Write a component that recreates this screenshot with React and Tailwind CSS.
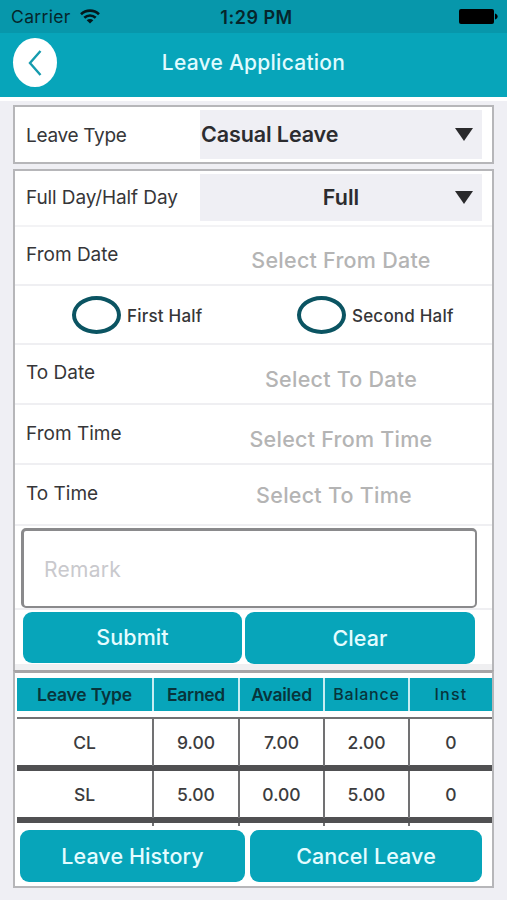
import clsx from 'clsx';

const leaves = [
  { type: 'CL', earned: '9.00', availed: '7.00', balance: '2.00', inst: '0' },
  { type: 'SL', earned: '5.00', availed: '0.00', balance: '5.00', inst: '0' },
];

const COLS = 'grid grid-cols-[137px_86px_85px_85px_1fr]';

const StatusBar = () => (
  <div className="grid h-[33px] grid-cols-[1fr_90px_1fr] items-center bg-[#0797ab] pl-[11px] pr-[9px] text-[#06262c]">
    <div className="flex items-center gap-[9px]">
      <span className="text-[17.5px] leading-[26px] tracking-[0.35px]">Carrier</span>
      <svg width="20" height="15" viewBox="0 0 20 15" fill="none" stroke="#04181c" strokeWidth="2.6">
        <path d="M1 5.2C6 0.4 14 0.4 19 5.2" />
        <path d="M4.3 8.8C7.6 5.7 12.4 5.7 15.7 8.8" />
        <path d="M10 14.6L6.7 11.2C8.6 9.6 11.4 9.6 13.3 11.2Z" fill="#04181c" stroke="none" />
      </svg>
    </div>
    <span className="mt-[2px] pl-[4px] text-center text-[18px] leading-[26px] font-semibold whitespace-nowrap tracking-[0.5px]">1:29 PM</span>
    <svg className="justify-self-end" width="39" height="15" viewBox="0 0 39 15">
      <rect x="0" y="0" width="35" height="15" rx="2" fill="#000" />
      <path d="M36 4.5C39.5 5.5 39.5 9.5 36 10.5Z" fill="#000" />
    </svg>
  </div>
);

const Header = () => (
  <header className="grid h-[64px] grid-cols-[60px_1fr_60px] items-start bg-[#07a5ba]">
    <button aria-label="Back" className="ml-[13px] mt-[5px] flex h-[49px] w-[44px] items-center justify-center rounded-[50%] bg-white">
      <svg width="14" height="26" viewBox="0 0 14 26" fill="none" stroke="#159bae" strokeWidth="2.4">
        <path d="M12.5 1L2 13L12.5 25" />
      </svg>
    </button>
    <h1 className="mt-[14px] text-center text-[21px] leading-[32px] font-medium tracking-[0.25px] text-[#e0fbff]">
      Leave Application
    </h1>
  </header>
);

const Select = ({ value, className }) => (
  <div className={clsx('flex w-[282px] items-center bg-[#efeff4] pr-[9px] text-[21.5px] font-semibold text-[#2c2c2f]', className)}>
    <span className="flex-1">{value}</span>
    <svg width="18" height="13" viewBox="0 0 18 13">
      <path d="M0 0H18L9 13Z" fill="#2a2a2c" />
    </svg>
  </div>
);

const Label = ({ children, className }) => (
  <span className={clsx('w-[185px] shrink-0 pl-[11px] text-[19px] leading-[26px] text-[#363638]', className)}>{children}</span>
);

const Field = ({ label, placeholder, className, hintClass }) => (
  <div className={clsx('flex items-start border-b-2 border-[#efeff2]', className)}>
    <Label>{label}</Label>
    <span className={clsx('w-[282px] text-center text-[21.5px] leading-[26px] font-medium tracking-[0.25px] text-[#b4b4b4]', hintClass)}>
      {placeholder}
    </span>
  </div>
);

const Radio = ({ label }) => (
  <label className="flex items-center gap-[6px] text-[17px] leading-[26px] font-medium tracking-[0.2px] text-[#363638]">
    <span className="h-[38px] w-[49px] rounded-[50%] border-4 border-[#0b5462]" />
    <span className="pt-[2px]">{label}</span>
  </label>
);

const Button = ({ children, className }) => (
  <button className={clsx('rounded-[9px] bg-[#07a5ba] text-[21.5px] font-medium tracking-[0.1px] text-[#e4fcff]', className)}>
    {children}
  </button>
);

const LeaveTable = () => (
  <div className="ml-[2px] text-center font-medium">
    <div className={clsx(COLS, 'h-[33px] items-center bg-[#07a5ba] text-[17.5px] leading-[33px] text-[#08343b]')}>
      <span className="border-r-2 border-[#c7edf2] font-semibold tracking-[-0.2px]">Leave Type</span>
      <span className="border-r-2 border-[#c7edf2] font-semibold tracking-[-0.3px]">Earned</span>
      <span className="border-r-2 border-[#c7edf2] font-semibold tracking-[-0.2px]">Availed</span>
      <span className="border-r-2 border-[#c7edf2] text-[16px] tracking-[0.8px]">Balance</span>
      <span className="text-[16px] tracking-[1.2px]">Inst</span>
    </div>
    <div className="mt-[6px] border-t-2 border-[#717173]">
      {leaves.map((row) => (
        <div key={row.type} className={clsx(COLS, 'h-[52px] border-b-[6px] border-[#505052] text-[17.5px] leading-[47px] text-[#3c3c3e]')}>
          <span className="border-r-2 border-[#717173]">{row.type}</span>
          <span className="border-r-2 border-[#717173]">{row.earned}</span>
          <span className="border-r-2 border-[#717173]">{row.availed}</span>
          <span className="border-r-2 border-[#717173]">{row.balance}</span>
          <span>{row.inst}</span>
        </div>
      ))}
      <div className={clsx(COLS, 'h-[3px]')}>
        <span className="border-r-2 border-[#717173]" />
        <span className="border-r-2 border-[#717173]" />
        <span className="border-r-2 border-[#717173]" />
        <span className="border-r-2 border-[#717173]" />
      </div>
    </div>
  </div>
);

export default function App() {
  return (
    <div className="h-[900px] w-[507px] overflow-hidden bg-[#efeff4] font-['Inter',sans-serif]">
      <StatusBar />
      <Header />
      <div className="h-[4px] bg-white" />

      <main className="mt-[4px] ml-[13px] w-[481px]">
        <section className="flex h-[59px] items-center border-2 border-[#b6b6b9] bg-white">
          <Label className="pt-[2px] tracking-[-0.3px]">Leave Type</Label>
          <Select value="Casual Leave" className="h-[49px] pl-[1px] tracking-[-0.1px]" />
        </section>

        <section className="mt-[5px] flex h-[501px] flex-col border-x-2 border-t-2 border-[#b6b6b9] bg-white">
          <div className="flex h-[56px] items-start border-b-2 border-[#f3f3f5] pt-[3px]">
            <Label className="mt-[11px] tracking-[-0.1px]">Full Day/Half Day</Label>
            <Select value="Full" className="h-[47px] pl-[27px] text-center" />
          </div>
          <Field label="From Date" placeholder="Select From Date" className="h-[59px] pt-[15px]" hintClass="mt-[5px]" />
          <div className="flex h-[59px] items-center border-b-2 border-[#efeff2] pl-[57px]">
            <div className="w-[225px]"><Radio label="First Half" /></div>
            <Radio label="Second Half" />
          </div>
          <Field label="To Date" placeholder="Select To Date" className="h-[60px] pt-[15px]" hintClass="mt-[6px]" />
          <Field label="From Time" placeholder="Select From Time" className="h-[60px] pt-[16px]" hintClass="mt-[5px]" />
          <Field label="To Time" placeholder="Select To Time" className="h-[61px] pt-[16px]" hintClass="mt-[1px] pr-[14px]" />
          <div className="h-[84px] border-b-2 border-[#efeff2] pt-[2px] pl-[6px]">
            <div className="flex h-[80px] w-[456px] items-center rounded-[5px] border-2 border-t-[3px] border-l-[3px] border-[#8a8a8c] pt-[2px] pl-[20px] text-[21px] text-[#c9c9cd] tracking-[0.3px]">
              Remark
            </div>
          </div>
          <div className="flex gap-[3px] pt-[2px] pl-[8px]">
            <Button className="h-[51px] w-[219px]">Submit</Button>
            <Button className="h-[52px] w-[230px]">Clear</Button>
          </div>
          <div className="h-[6px] bg-[#efeff1]" />
        </section>

        <section className="h-[218px] border-2 border-t-[3px] border-[#b6b6b9] border-t-[#a7a5a7] bg-white pt-[5px]">
          <LeaveTable />
          <div className="mt-[4px] flex gap-[5px] pl-[5px]">
            <Button className="h-[52px] w-[225px]">Leave History</Button>
            <Button className="h-[52px] w-[232px]">Cancel Leave</Button>
          </div>
        </section>
      </main>
    </div>
  );
}
